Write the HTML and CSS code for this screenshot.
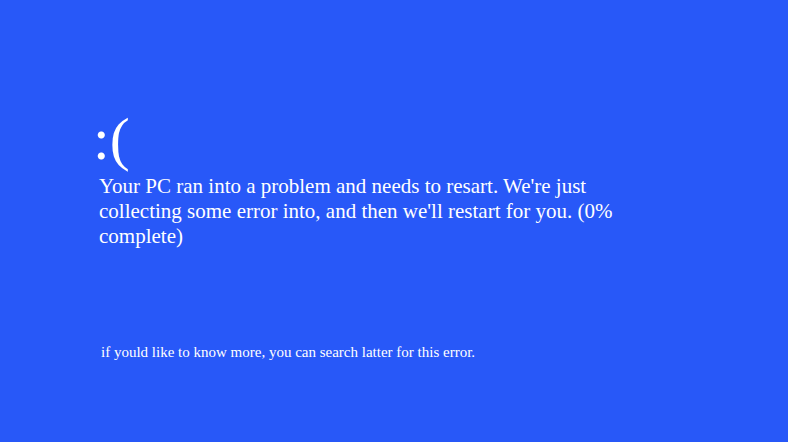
FILE: index.html
```html
<!DOCTYPE html>
<html>
<head>
<meta charset="utf-8">
<link rel="stylesheet" href="styles.css">
</head>
<body>
<main class="screen">
  <div class="face">:(</div>
  <p class="message">Your PC ran into a problem and needs to resart. We're just collecting some error into, and then we'll restart for you. (0% complete)</p>
  <p class="info">if yould like to know more, you can search latter for this error.</p>
</main>
</body>
</html>
```
FILE: styles.css
```css
html, body {
  margin: 0;
  padding: 0;
  background: #2858f8;
}
.screen {
  width: 788px;
  height: 442px;
  box-sizing: border-box;
  padding: 104px 0 0 99px;
  color: #ffffff;
  font-family: "Liberation Serif", "Times New Roman", serif;
}
.face {
  font-size: 60px;
  line-height: 70px;
  margin-left: -6px;
}
.message {
  margin: 0;
  width: 520px;
  font-size: 21px;
  line-height: 25px;
}
.info {
  margin: 93px 0 0 2px;
  font-size: 15px;
  line-height: 20px;
}
```
